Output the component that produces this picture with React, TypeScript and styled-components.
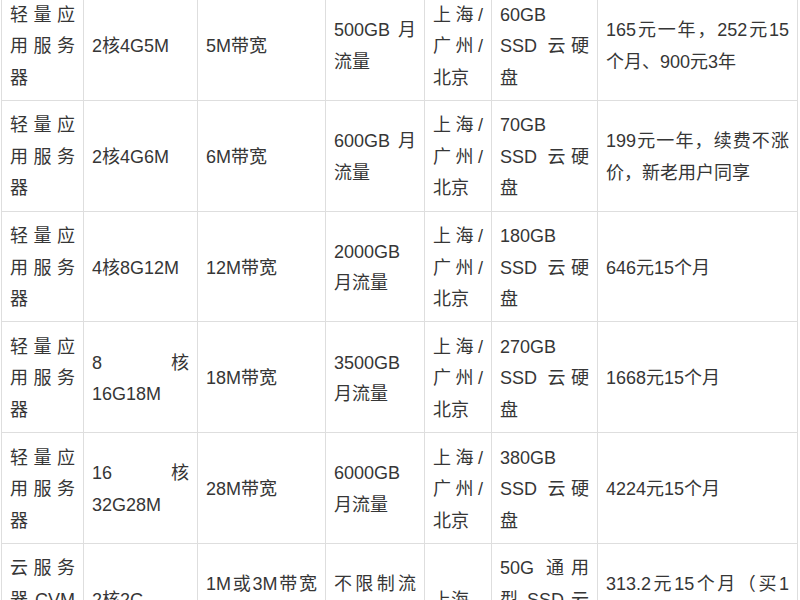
import { FC } from "react"
import styled, { createGlobalStyle } from "styled-components"

const GlobalStyle = createGlobalStyle`
  html, body {
    margin: 0;
    padding: 0;
    background: #fff;
    overflow: hidden;
  }
`

const Page = styled.div`
  width: 800px;
  height: 600px;
  overflow: hidden;
`

const Table = styled.table`
  width: 796px;
  margin: -11px 0 0 1px;
  border-collapse: collapse;
  table-layout: fixed;
  font-family: "Liberation Sans", "Noto Sans CJK SC", sans-serif;
  font-size: 18px;
  line-height: 31.5px;
  color: #363636;
`

const Row = styled.tr`
  height: 110.75px;
`

const Cell = styled.td`
  border: 1px solid #dedede;
  padding: 9.6px 8px 5.6px;
  vertical-align: middle;
  text-align: justify;
  word-break: normal;
`

const widths = [82, 114, 128, 99, 67, 106, 200]

type Plan = {
  type: string
  spec: string
  bandwidth: string
  traffic: string
  region: string
  disk: string
  price: string
}

const plans: Plan[] = [
  {
    type: "轻量应用服务器",
    spec: "2核4G5M",
    bandwidth: "5M带宽",
    traffic: "500GB 月流量",
    region: "上海/广州/北京",
    disk: "60GB\nSSD 云硬盘",
    price: "165元一年，252元15个月、900元3年",
  },
  {
    type: "轻量应用服务器",
    spec: "2核4G6M",
    bandwidth: "6M带宽",
    traffic: "600GB 月流量",
    region: "上海/广州/北京",
    disk: "70GB\nSSD 云硬盘",
    price: "199元一年，续费不涨价，新老用户同享",
  },
  {
    type: "轻量应用服务器",
    spec: "4核8G12M",
    bandwidth: "12M带宽",
    traffic: "2000GB 月流量",
    region: "上海/广州/北京",
    disk: "180GB\nSSD 云硬盘",
    price: "646元15个月",
  },
  {
    type: "轻量应用服务器",
    spec: "8核 16G18M",
    bandwidth: "18M带宽",
    traffic: "3500GB 月流量",
    region: "上海/广州/北京",
    disk: "270GB\nSSD 云硬盘",
    price: "1668元15个月",
  },
  {
    type: "轻量应用服务器",
    spec: "16核 32G28M",
    bandwidth: "28M带宽",
    traffic: "6000GB 月流量",
    region: "上海/广州/北京",
    disk: "380GB\nSSD 云硬盘",
    price: "4224元15个月",
  },
  {
    type: "云服务器 CVM S5",
    spec: "2核2G",
    bandwidth: "1M或3M带宽 可选",
    traffic: "不限制流量",
    region: "上海",
    disk: "50G 通用型 SSD 云硬盘",
    price: "313.2元15个月（买1年送3个月）",
  },
]

const Lines: FC<{ text: string }> = ({ text }) => {
  const parts = text.split("\n")
  return (
    <>
      {parts.map((p, i) => (
        <span key={i}>
          {p}
          {i < parts.length - 1 && <br />}
        </span>
      ))}
    </>
  )
}

const App: FC = () => {
  return (
    <Page>
      <GlobalStyle />
      <Table>
        <colgroup>
          {widths.map((w, i) => (
            <col key={i} style={{ width: w }} />
          ))}
        </colgroup>
        <tbody>
          {plans.map((p, i) => (
            <Row key={i}>
              <Cell>{p.type}</Cell>
              <Cell>{p.spec}</Cell>
              <Cell>{p.bandwidth}</Cell>
              <Cell>{p.traffic}</Cell>
              <Cell>{p.region}</Cell>
              <Cell><Lines text={p.disk} /></Cell>
              <Cell>{p.price}</Cell>
            </Row>
          ))}
        </tbody>
      </Table>
    </Page>
  )
}

export default App
